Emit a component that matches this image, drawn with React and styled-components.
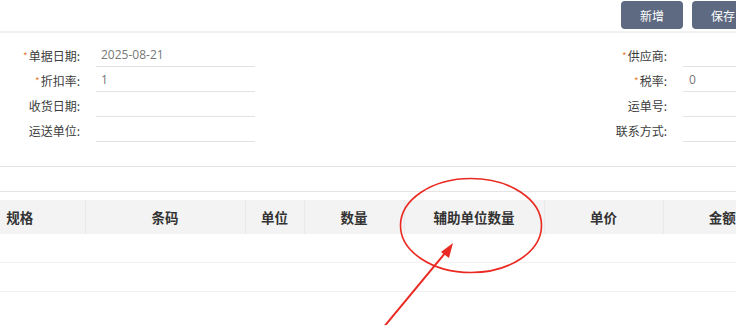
import React from 'react'
import styled, { createGlobalStyle } from 'styled-components'

const GlobalStyle = createGlobalStyle`
html {
  overflow: hidden;
}
body {
  margin: 0;
  padding: 0;
  background: #fff;
  font-family: "Noto Sans CJK SC", "Open Sans", sans-serif;
  color: #333;
}
`

const Page = styled.div`
width: 860px;
height: 325px;
position: relative;
`

const Toolbar = styled.div`
display: flex;
justify-content: flex-end;
gap: 9px;
padding: 1px 106px 0 0;
height: 33px;
box-sizing: border-box;
border-bottom: 2px solid #f2f2f2;
`

const Button = styled.button`
width: 62px;
height: 28px;
border: none;
border-radius: 4px;
background: #5d6a81;
color: #fff;
font-family: "Noto Sans CJK SC", sans-serif;
font-size: 12px;
cursor: pointer;
`

const Form = styled.div`
display: grid;
grid-template-columns: 80px 159px 1fr 80px 159px;
column-gap: 16px;
row-gap: 1px;
padding: 10px 18px 24px 0;
border-bottom: 1px solid #e4e4e4;
`

const Label = styled.div`
grid-column: ${p => p.$col};
display: flex;
align-items: center;
justify-content: flex-end;
font-size: 12px;
color: #3c3c3c;
white-space: nowrap;

span {
  color: #e8833a;
  font-size: 10px;
  margin-right: 1px;
  align-self: flex-start;
  margin-top: 5px;
}
`

const Field = styled.div`
grid-column: ${p => p.$col};
height: 24px;
box-sizing: border-box;
border-bottom: 1px solid #e2e2e2;
display: flex;
align-items: center;
padding-left: ${p => p.$pad || 5}px;
font-family: "Open Sans", "Noto Sans CJK SC", sans-serif;
font-size: 12px;
color: #777;
`

const Spacer = styled.div`
height: 24px;
border-bottom: 1px solid #e4e4e4;
`

const TableWrap = styled.div`
margin-top: 8px;
overflow: hidden;
`

const Table = styled.table`
border-collapse: collapse;
table-layout: fixed;
margin-left: -45px;
font-family: "Noto Sans CJK SC", sans-serif;

th {
  background: #f3f3f3;
  height: 34px;
  font-size: 13.5px;
  font-weight: 600;
  color: #333;
  text-align: center;
  border-left: 1px solid #e9e9e9;
  padding: 0;
}
th:first-child {
  border-left: none;
}
td {
  height: 28px;
  padding: 0;
  border-bottom: 1px solid #f1f1f1;
}
`

const Annotation = styled.svg`
position: absolute;
left: 0;
top: 0;
pointer-events: none;
`

const columns = [
  { title: '规格', w: 130 },
  { title: '条码', w: 160 },
  { title: '单位', w: 59 },
  { title: '数量', w: 100 },
  { title: '辅助单位数量', w: 140 },
  { title: '单价', w: 119 },
  { title: '金额', w: 118 },
]

const left = [
  { label: '单据日期', req: true, value: '2025-08-21' },
  { label: '折扣率', req: true, value: '1' },
  { label: '收货日期' },
  { label: '运送单位' },
]

const right = [
  { label: '供应商', req: true },
  { label: '税率', req: true, value: '0' },
  { label: '运单号' },
  { label: '联系方式' },
]

const App = () => {
  return (
    <Page>
      <GlobalStyle />
      <Toolbar>
        <Button>新增</Button>
        <Button>保存</Button>
      </Toolbar>
      <Form>
        {left.map((l, i) => (
          <React.Fragment key={l.label}>
            <Label $col={1}>{l.req && <span>*</span>}{l.label}:</Label>
            <Field $col={2}>{l.value}</Field>
            <Label $col={4}>{right[i].req && <span>*</span>}{right[i].label}:</Label>
            <Field $col={5} $pad={6}>{right[i].value}</Field>
          </React.Fragment>
        ))}
      </Form>
      <Spacer />
      <TableWrap>
        <Table>
          <colgroup>
            {columns.map(c => <col key={c.title} style={{ width: c.w }} />)}
          </colgroup>
          <thead>
            <tr>
              {columns.map(c => <th key={c.title}>{c.title}</th>)}
            </tr>
          </thead>
          <tbody>
            <tr>{columns.map(c => <td key={c.title} />)}</tr>
            <tr>{columns.map(c => <td key={c.title} />)}</tr>
          </tbody>
        </Table>
      </TableWrap>
      <Annotation width="736" height="325" viewBox="0 0 736 325">
        <ellipse cx="471" cy="225.5" rx="70.5" ry="47" fill="none" stroke="#ea2a22" strokeWidth="1.6" />
        <line x1="378" y1="334" x2="446" y2="252" stroke="#ea2a22" strokeWidth="2" />
        <polygon points="453,243 441,252 449,258" fill="#ea2a22" />
      </Annotation>
    </Page>
  )
}

export default App
